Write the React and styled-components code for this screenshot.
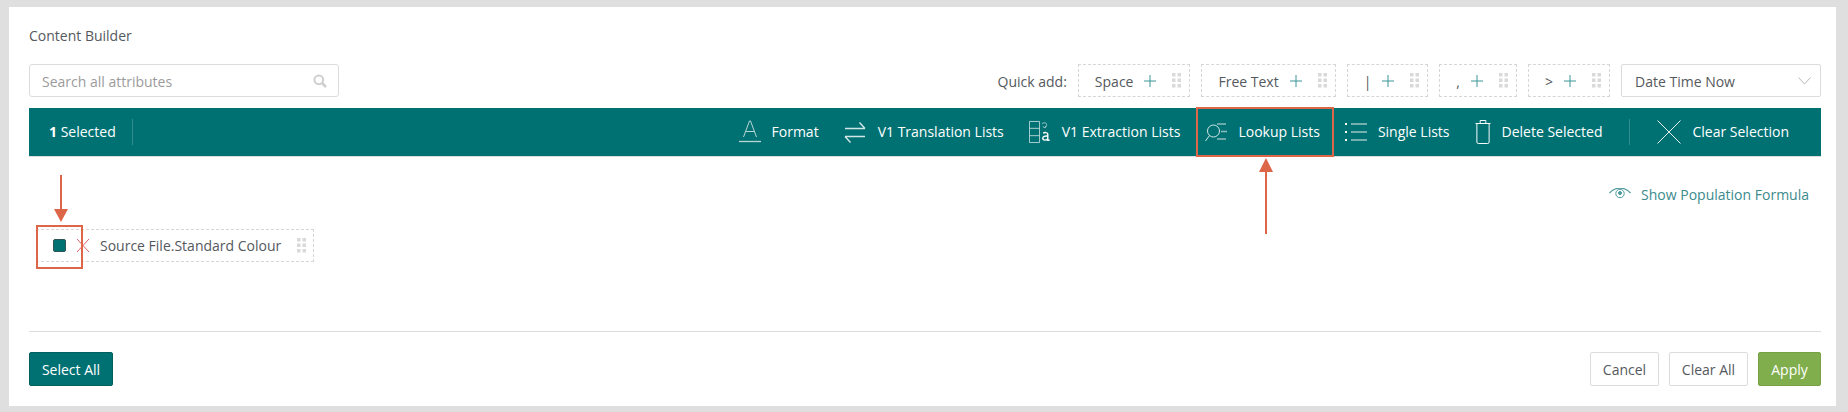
import React from "react";
import styled, { createGlobalStyle } from "styled-components";

const TEAL = "#007173";
const RED = "#dd6648";
const INK = "#55595e";

const GlobalStyle = createGlobalStyle`
  html, body {
    margin: 0;
    padding: 0;
    background: #dfdfdf;
    font-family: "Open Sans", "Liberation Sans", sans-serif;
    font-size: 14px;
    color: ${INK};
  }
`;

const Panel = styled.div`
  position: relative;
  box-sizing: border-box;
  width: 1827px;
  height: 399px;
  margin: 7px 12px 6px 9px;
  padding: 0 15px 0 20px;
  background: #fff;
  display: flex;
  flex-direction: column;
`;

const Title = styled.div`
  height: 57px;
  padding-top: 20px;
  box-sizing: border-box;
  line-height: 18px;
`;

const TopRow = styled.div`
  display: flex;
  justify-content: space-between;
  height: 33px;
`;

const TopText = styled.span`
  padding-top: 2px;
`;

const SearchBox = styled.div`
  box-sizing: border-box;
  width: 310px;
  border: 1px solid #dcdcdc;
  border-radius: 3px;
  padding: 0 11px 0 12px;
  display: flex;
  align-items: center;
  justify-content: space-between;
  color: #9b9b9b;
`;

const QuickAdd = styled.div`
  display: flex;
  align-items: center;
  gap: 11px;
`;

const QuickChip = styled.div`
  box-sizing: border-box;
  height: 33px;
  border: 1px dashed #d6d6d6;
  padding: 0 8px 0 16px;
  display: flex;
  align-items: center;
  gap: 11px;
`;

const GripWrap = styled.span`
  display: flex;
  margin-left: 5px;
`;

const SelectBox = styled.div`
  box-sizing: border-box;
  width: 200px;
  height: 33px;
  border: 1px solid #dcdcdc;
  border-radius: 2px;
  padding: 0 9px 0 13px;
  display: flex;
  align-items: center;
  justify-content: space-between;
`;

const Toolbar = styled.div`
  box-sizing: border-box;
  height: 49px;
  margin-top: 11px;
  padding: 0 32px 1px 20px;
  background: ${TEAL};
  border-bottom: 1px solid #dcdcdc;
  color: #fff;
  display: flex;
  align-items: center;
  justify-content: space-between;
`;

const SelectedCount = styled.div`
  display: flex;
  align-items: center;
  gap: 16px;
  b {
    font-weight: 700;
  }
`;

const Divider = styled.span`
  width: 1px;
  height: 26px;
  background: rgba(255, 255, 255, 0.2);
  margin: ${(p) => p.$margin || 0};
`;

const Actions = styled.div`
  display: flex;
  align-items: center;
  gap: 25px;
`;

const Action = styled.div`
  display: flex;
  align-items: center;
  gap: 11px;
`;

const FormulaRow = styled.div`
  display: flex;
  justify-content: flex-end;
  align-items: center;
  gap: 10px;
  height: 20px;
  margin-top: 27px;
  padding-right: 12px;
  color: #3b8a8c;
`;

const ChipRow = styled.div`
  display: flex;
  margin-top: 25px;
  padding-left: 7px;
`;

const AttributeChip = styled.div`
  box-sizing: border-box;
  width: 278px;
  height: 33px;
  border: 1px dashed #d6d6d6;
  padding: 0 7px 0 16px;
  display: flex;
  align-items: center;
`;

const CheckBox = styled.span`
  box-sizing: border-box;
  width: 13px;
  height: 13px;
  border-radius: 2px;
  background: ${TEAL};
  border: 1px solid #2f5557;
  margin-right: 11px;
`;

const ChipText = styled.span`
  margin-left: 11px;
  flex: 1;
`;

const Footer = styled.div`
  margin-top: auto;
  height: 75px;
  box-sizing: border-box;
  border-top: 1px solid #dcdcdc;
  padding-top: 20px;
  display: flex;
  justify-content: space-between;
`;

const ButtonGroup = styled.div`
  display: flex;
  gap: 10px;
`;

const Button = styled.button`
  box-sizing: border-box;
  width: ${(p) => p.$width}px;
  height: 34px;
  padding: 0;
  border-radius: 2px;
  border: 1px solid ${(p) => p.$border || "#dcdcdc"};
  background: ${(p) => p.$bg || "#fff"};
  color: ${(p) => (p.$bg ? "#fff" : INK)};
  font: inherit;
`;

const Callout = styled.div`
  position: absolute;
  box-sizing: border-box;
  left: ${(p) => p.$left}px;
  top: ${(p) => p.$top}px;
  width: ${(p) => p.$width}px;
  height: ${(p) => p.$height}px;
  border: 2px solid ${RED};
`;

const ArrowSvg = styled.svg`
  position: absolute;
  left: ${(p) => p.$left}px;
  top: ${(p) => p.$top}px;
`;

const Grip = () => (
  <GripWrap>
    <svg width="9" height="15" viewBox="0 0 9 15" fill="#d9d9d9">
      <rect x="0" y="0" width="3.5" height="3.5" />
      <rect x="5.5" y="0" width="3.5" height="3.5" />
      <rect x="0" y="5.5" width="3.5" height="3.5" />
      <rect x="5.5" y="5.5" width="3.5" height="3.5" />
      <rect x="0" y="11" width="3.5" height="3.5" />
      <rect x="5.5" y="11" width="3.5" height="3.5" />
    </svg>
  </GripWrap>
);

const Plus = () => (
  <svg width="12" height="12" viewBox="0 0 12 12" stroke="#3b9496" strokeWidth="1">
    <path d="M6 0v12M0 6h12" />
  </svg>
);

const SearchIcon = () => (
  <svg width="14" height="14" viewBox="0 0 14 14" fill="none" stroke="#cfcfcf" strokeWidth="2">
    <circle cx="5.8" cy="5.8" r="4.4" />
    <path d="M9 9l4 4" strokeWidth="2.6" />
  </svg>
);

const Chevron = () => (
  <svg width="13" height="8" viewBox="0 0 13 8" fill="none" stroke="#b9b9b9">
    <path d="M.5.500l6 6.500 6-6.500" />
  </svg>
);

const FormatIcon = () => (
  <svg width="22" height="24" viewBox="0 0 22 24" fill="none" stroke="#b9d6d6">
    <path d="M4.500 17L10.500 1h1L17.500 17M7 11.500h8" />
    <path d="M0 21.500h22" strokeWidth="1.300" />
  </svg>
);

const SwapIcon = () => (
  <svg width="23" height="22" viewBox="0 0 23 22" fill="none" stroke="#d3e6e6" strokeWidth="1.400">
    <path d="M1 7.500h20M15.500 1.500l5.500 6" />
    <path d="M21 15.500H1M6.500 21.500L1 15.500" />
  </svg>
);

const ExtractIcon = () => (
  <svg width="22" height="24" viewBox="0 0 24 24" preserveAspectRatio="xMinYMid meet" fill="none" stroke="#b9d6d6">
    <path d="M.5.500h11v23H.5zM.5 8h11M.5 16h11" />
    <path d="M14 3c3-2 6-1 5 2l-1.500 2M15 6l2.500 1.500L19 5.500" strokeWidth=".9" />
    <path d="M15.500 13.500c1-1.300 5-1.300 5 .8v6.700h2M20.500 16.500c-3-.5-5.500.3-5.500 2.400 0 2.600 4 2.600 5.500.3" stroke="#fff" strokeWidth="1.500" />
  </svg>
);

const LookupIcon = () => (
  <svg width="22" height="22" viewBox="0 0 22 22" fill="none">
    <circle cx="8.500" cy="10" r="6" stroke="#d3e6e6" />
    <path d="M4.500 14.500L.5 20" stroke="#d3e6e6" />
    <path d="M12 3h9M16 10.500h6M12 18h9" strokeWidth="1.300" stroke="#8fbcbc" />
  </svg>
);

const ListIcon = () => (
  <svg width="22" height="20" viewBox="0 0 22 20" fill="none" stroke="#9cc5c5" strokeWidth="1.400">
    <path d="M0 2h2M0 10h2M0 18h2" stroke="#fff" strokeWidth="2" />
    <path d="M6 2h16M6 10h16M6 18h16" />
  </svg>
);

const TrashIcon = () => (
  <svg width="16" height="24" viewBox="0 0 17 24" preserveAspectRatio="none" fill="none" stroke="#fff">
    <path d="M.5 3.500h16M2 3.500v18.500a1.500 1.500 0 0 0 1.500 1.500h10a1.500 1.500 0 0 0 1.500-1.500V3.500M5.500 3.500v-3h6v3" />
  </svg>
);

const ClearIcon = () => (
  <svg width="24" height="24" viewBox="0 0 24 24" stroke="#e3efef">
    <path d="M.5.500l23 23M23.500.500l-23 23" />
  </svg>
);

const EyeIcon = () => (
  <svg width="22" height="12" viewBox="0 0 22 12" fill="none" stroke="#4c9a9c">
    <path d="M.5 5C6-1.500 16-1.500 21.500 5" strokeWidth="1.200" />
    <circle cx="11" cy="5.500" r="4.200" />
    <circle cx="11" cy="5" r="1.500" fill="#4c9a9c" />
  </svg>
);

const RemoveIcon = () => (
  <svg width="12" height="13" viewBox="0 0 12 13" stroke="#e0616a">
    <path d="M0 0l12 13M12 0L0 13" />
  </svg>
);

const quickItems = ["Space", "Free Text", "|", ",", ">"];

const actions = [
  { label: "Format", icon: <FormatIcon /> },
  { label: "V1 Translation Lists", icon: <SwapIcon /> },
  { label: "V1 Extraction Lists", icon: <ExtractIcon /> },
  { label: "Lookup Lists", icon: <LookupIcon /> },
  { label: "Single Lists", icon: <ListIcon /> },
  { label: "Delete Selected", icon: <TrashIcon /> },
];

const App = () => (
  <Panel>
    <GlobalStyle />
    <Title>Content Builder</Title>
    <TopRow>
      <SearchBox>
        <TopText>Search all attributes</TopText>
        <SearchIcon />
      </SearchBox>
      <QuickAdd>
        <TopText>Quick add:</TopText>
        {quickItems.map((item) => (
          <QuickChip key={item}>
            <TopText>{item}</TopText>
            <Plus />
            <Grip />
          </QuickChip>
        ))}
        <SelectBox>
          <TopText>Date Time Now</TopText>
          <Chevron />
        </SelectBox>
      </QuickAdd>
    </TopRow>
    <Toolbar>
      <SelectedCount>
        <span>
          <b>1</b> Selected
        </span>
        <Divider />
      </SelectedCount>
      <Actions>
        {actions.map((action) => (
          <Action key={action.label}>
            {action.icon}
            <span>{action.label}</span>
          </Action>
        ))}
        <Divider $margin="0 2px" />
        <Action>
          <ClearIcon />
          <span>Clear Selection</span>
        </Action>
      </Actions>
    </Toolbar>
    <FormulaRow>
      <EyeIcon />
      <span>Show Population Formula</span>
    </FormulaRow>
    <ChipRow>
      <AttributeChip>
        <CheckBox />
        <RemoveIcon />
        <ChipText>Source File.Standard Colour</ChipText>
        <Grip />
      </AttributeChip>
    </ChipRow>
    <Footer>
      <Button $width={84} $bg={TEAL} $border="#005f61">
        Select All
      </Button>
      <ButtonGroup>
        <Button $width={69}>Cancel</Button>
        <Button $width={79}>Clear All</Button>
        <Button $width={63} $bg="#81ae4d" $border="#76a145">
          Apply
        </Button>
      </ButtonGroup>
    </Footer>

    <Callout $left={1187} $top={100} $width={138} $height={50} />
    <Callout $left={27} $top={218} $width={47} $height={44} />
    <ArrowSvg $left={45} $top={168} width="14" height="48" viewBox="0 0 14 48" fill={RED} stroke={RED}>
      <path d="M7 0v36" strokeWidth="2" />
      <path d="M0 34h14L7 47z" stroke="none" />
    </ArrowSvg>
    <ArrowSvg $left={1250} $top={151} width="14" height="76" viewBox="0 0 14 76" fill={RED} stroke={RED}>
      <path d="M7 12v64" strokeWidth="2" />
      <path d="M0 14h14L7 0z" stroke="none" />
    </ArrowSvg>
  </Panel>
);

export default App;
